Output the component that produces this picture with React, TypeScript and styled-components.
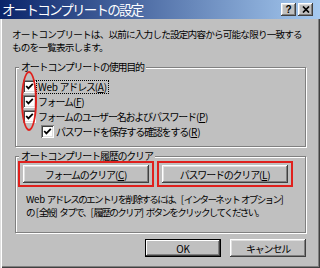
import React from 'react';
import styled, { createGlobalStyle } from 'styled-components';

const GlobalStyle = createGlobalStyle`
  html, body {
    margin: 0;
    padding: 0;
    background: #c0c0c0;
  }
  body {
    font-family: "Noto Sans CJK JP", "Noto Sans", sans-serif;
  }
  * {
    box-sizing: border-box;
  }
`;

const Window = styled.div`
  position: relative;
  width: 320px;
  height: 268px;
  display: flex;
  flex-direction: column;
  background: #c0c0c0;
  color: #000;
  font-size: 10px;
  letter-spacing: -1.2px;
  box-shadow: inset 1px 0 #dfdfdf, inset 2px 0 #fff, inset -1px -1px #404040, inset -2px -2px #808080;
  overflow: hidden;
`;

const TitleBar = styled.div`
  flex: none;
  height: 19px;
  display: flex;
  align-items: center;
  padding: 0 7px 0 2px;
  background: linear-gradient(to right, #0a246a, #a6caf0);
`;

const TitleText = styled.span`
  color: #fff;
  font-size: 13.5px;
  letter-spacing: -1.75px;
  line-height: 19px;
  white-space: nowrap;
`;

const CaptionButtons = styled.div`
  margin-left: auto;
  display: flex;
  gap: 2px;
`;

const CaptionButton = styled.div`
  width: 15px;
  height: 13px;
  display: flex;
  align-items: center;
  justify-content: center;
  background: #c0c0c0;
  box-shadow: inset -1px -1px #404040, inset 1px 1px #fff, inset -2px -2px #808080, inset 2px 2px #dfdfdf;
  font: bold 10px "Liberation Sans", sans-serif;
  letter-spacing: 0;
  color: #000;
`;

const Body = styled.div`
  flex: 1;
  display: flex;
  flex-direction: column;
  padding: 0 14px 0 15px;
`;

const Description = styled.p`
  margin: 9px 0 0 -3px;
  font-size: 9.6px;
  letter-spacing: -0.8px;
  line-height: 13px;
  white-space: nowrap;
`;

const Group = styled.fieldset<{ $top: number; $bottom: number }>`
  margin: ${p => p.$top}px 0 0;
  padding: 0 0 ${p => p.$bottom}px;
  min-width: 0;
  border: 1px solid #808080;
  box-shadow: 1px 1px 0 #fff, inset 1px 1px 0 #fff;
`;

const Legend = styled.legend`
  margin-left: 3px;
  padding: 0 2px;
  line-height: 12px;
  background: #c0c0c0;
  white-space: nowrap;
`;

const CheckList = styled.div`
  padding-top: 6px;
  display: flex;
  flex-direction: column;
`;

const CheckRow = styled.div<{ $indent?: boolean }>`
  height: 15px;
  display: flex;
  align-items: center;
  gap: 2px;
  padding-left: ${p => (p.$indent ? 25 : 7)}px;
  white-space: nowrap;
`;

const CheckBox = styled.span`
  flex: none;
  width: 13px;
  height: 13px;
  display: flex;
  align-items: center;
  justify-content: center;
  background: #fff;
  box-shadow: inset 1px 1px #808080, inset -1px -1px #fff, inset 2px 2px #404040, inset -2px -2px #dfdfdf;
`;

const FocusLabel = styled.span`
  margin-left: -1px;
  padding: 0 1px;
  line-height: 12px;
  outline: 1px dotted #000;
`;

const Latin = styled.span`
  letter-spacing: -0.3px;
`;

const Key = styled.span`
  text-decoration: underline;
`;

const ButtonRow = styled.div`
  margin-top: -1px;
  padding-left: 2px;
  display: flex;
  gap: 3px;
`;

const RedMark = styled.div`
  padding: 2px 3px;
  border: 2px solid #e0201c;
`;

const PushButton = styled.div<{ $width: number; $default?: boolean }>`
  width: ${p => p.$width}px;
  height: 18px;
  display: flex;
  align-items: center;
  justify-content: center;
  background: #c0c0c0;
  white-space: nowrap;
  box-shadow: ${p =>
    p.$default
      ? 'inset 0 0 0 1px #000, inset -2px -2px #404040, inset 2px 2px #fff, inset -3px -3px #808080'
      : 'inset -1px -1px #404040, inset 1px 1px #fff, inset -2px -2px #808080, inset 2px 2px #dfdfdf'};
`;

const Info = styled.p`
  margin: 6px 0 0 10px;
  font-size: 9.6px;
  letter-spacing: -1.7px;
  line-height: 13px;
  white-space: nowrap;
`;

const Footer = styled.div`
  margin-top: 6px;
  display: flex;
  justify-content: flex-end;
  gap: 9px;
`;

const RedEllipse = styled.div`
  position: absolute;
  left: 21px;
  top: 71px;
  width: 16px;
  height: 60px;
  border: 2px solid #e0201c;
  border-radius: 50%;
`;

const Mnemonic = ({ k }: { k: string }) => (
  <Latin>
    (<Key>{k}</Key>)
  </Latin>
);

const Check = () => (
  <CheckBox>
    <svg width="9" height="9" viewBox="0 0 9 9">
      <polyline points="1.2,4 3.4,6.4 7.8,1.8" fill="none" stroke="#000" strokeWidth="1.8" />
    </svg>
  </CheckBox>
);

export default function App() {
  return (
    <>
      <GlobalStyle />
      <Window>
        <TitleBar>
          <TitleText>オートコンプリートの設定</TitleText>
          <CaptionButtons>
            <CaptionButton>?</CaptionButton>
            <CaptionButton>
              <svg width="8" height="7" viewBox="0 0 8 7">
                <path d="M1 0.5 L7 6.5 M7 0.5 L1 6.5" stroke="#000" strokeWidth="1.7" />
              </svg>
            </CaptionButton>
          </CaptionButtons>
        </TitleBar>
        <Body>
          <Description>
            オートコンプリートは、以前に入力した設定内容から可能な限り一致する
            <br />
            ものを一覧表示します。
          </Description>
          <Group $top={7} $bottom={7}>
            <Legend>オートコンプリートの使用目的</Legend>
            <CheckList>
              <CheckRow>
                <Check />
                <FocusLabel>
                  <Latin>Web </Latin>アドレス<Mnemonic k="A" />
                </FocusLabel>
              </CheckRow>
              <CheckRow>
                <Check />
                <span>
                  フォーム<Mnemonic k="F" />
                </span>
              </CheckRow>
              <CheckRow>
                <Check />
                <span>
                  フォームのユーザー名およびパスワード<Mnemonic k="P" />
                </span>
              </CheckRow>
              <CheckRow $indent>
                <Check />
                <span>
                  パスワードを保存する確認をする<Mnemonic k="R" />
                </span>
              </CheckRow>
            </CheckList>
          </Group>
          <Group $top={3} $bottom={13}>
            <Legend>オートコンプリート履歴のクリア</Legend>
            <ButtonRow>
              <RedMark>
                <PushButton $width={126}>
                  フォームのクリア<Mnemonic k="C" />
                </PushButton>
              </RedMark>
              <RedMark>
                <PushButton $width={126}>
                  パスワードのクリア<Mnemonic k="L" />
                </PushButton>
              </RedMark>
            </ButtonRow>
            <Info>
              <Latin>Web </Latin>アドレスのエントリを削除するには、<Latin>[</Latin>インターネット
              <Latin> </Latin>オプション<Latin>]</Latin>
              <br />
              の<Latin> [</Latin>全般<Latin>] </Latin>タブで、<Latin>[</Latin>履歴のクリア
              <Latin>] </Latin>ボタンをクリックしてください。
            </Info>
          </Group>
          <Footer>
            <PushButton $width={76} $default>
              <Latin>OK</Latin>
            </PushButton>
            <PushButton $width={76}>キャンセル</PushButton>
          </Footer>
        </Body>
        <RedEllipse />
      </Window>
    </>
  );
}
